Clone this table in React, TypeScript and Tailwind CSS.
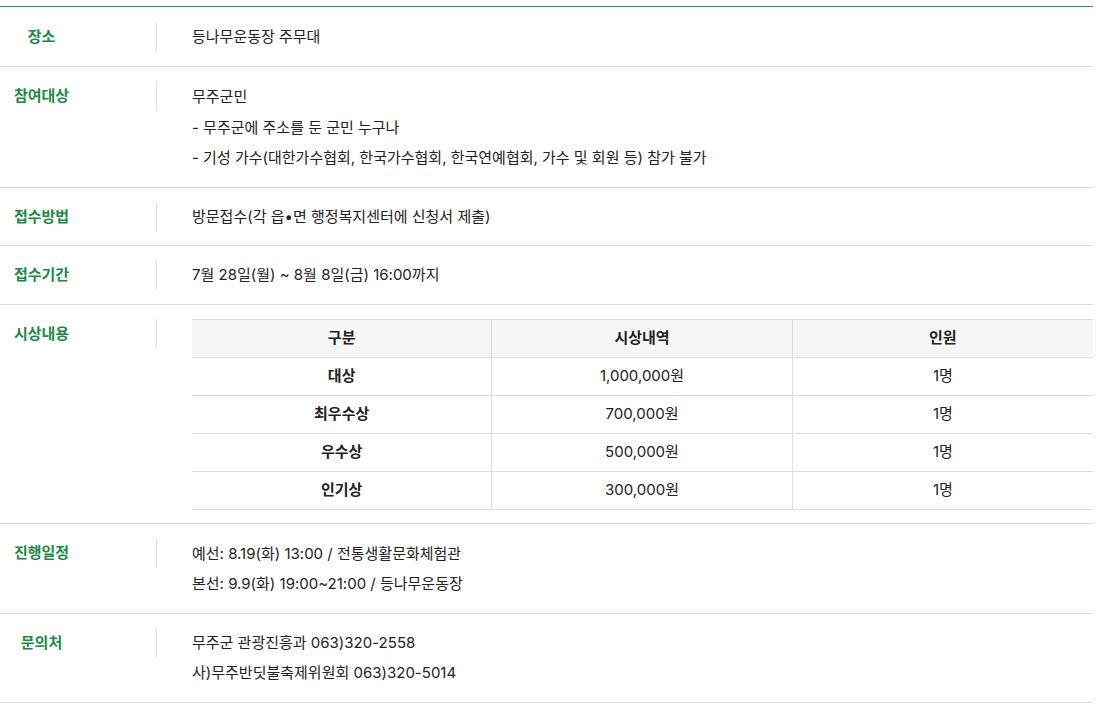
const prizes = [
  { name: "대상", amount: "1,000,000원", count: "1명" },
  { name: "최우수상", amount: "700,000원", count: "1명" },
  { name: "우수상", amount: "500,000원", count: "1명" },
  { name: "인기상", amount: "300,000원", count: "1명" },
];

const Row = ({ label, pad = "pt-[14px] pb-[14px]", children }: { label: string; pad?: string; children: React.ReactNode }) => (
  <div className={`flex border-b border-[#dddddd] ${pad}`}>
    <div className="w-[157px] shrink-0 h-[30px] border-r border-[#dddddd] flex">
      <div className="w-[83px] text-center font-bold text-[#1b8a45] leading-[30px]">{label}</div>
    </div>
    <div className="flex-1 pl-[35px] leading-[30px] text-[#222222]">{children}</div>
  </div>
);

export default function App() {
  return (
    <div
      className="bg-white min-h-[708px] pt-[6px] text-[15px]"
      style={{ fontFamily: 'Inter, "Noto Sans CJK KR", sans-serif' }}
    >
      <div className="w-[1093px] border-t border-[#1a9a4c]">
        <Row label="장소" pad="pt-[15px] pb-[14px]">등나무운동장 주무대</Row>
        <Row label="참여대상">
          <p className="leading-[31px]">무주군민</p>
          <p className="leading-[31px]">- 무주군에 주소를 둔 군민 누구나</p>
          <p>- 기성 가수(대한가수협회, 한국가수협회, 한국연예협회, 가수 및 회원 등) 참가 불가</p>
        </Row>
        <Row label="접수방법" pad="pt-[14px] pb-[13px]">방문접수(각 읍•면 행정복지센터에 신청서 제출)</Row>
        <Row label="접수기간">7월 28일(월) ~ 8월 8일(금) 16:00까지</Row>
        <Row label="시상내용" pad="pt-[14px] pb-[13px]">
          <div className="border-t border-[#dddddd] leading-normal">
            <div className="grid grid-cols-3 bg-[#f7f7f7] border-b border-[#dddddd] font-bold">
              <div className="h-[37px] flex items-center justify-center border-r border-[#dddddd]">구분</div>
              <div className="h-[37px] flex items-center justify-center border-r border-[#dddddd]">시상내역</div>
              <div className="h-[37px] flex items-center justify-center">인원</div>
            </div>
            {prizes.map((p) => (
              <div key={p.name} className="grid grid-cols-3 border-b border-[#dddddd]">
                <div className="h-[37px] flex items-center justify-center border-r border-[#dddddd] font-bold">{p.name}</div>
                <div className="h-[37px] flex items-center justify-center border-r border-[#dddddd]">{p.amount}</div>
                <div className="h-[37px] flex items-center justify-center">{p.count}</div>
              </div>
            ))}
          </div>
        </Row>
        <Row label="진행일정">
          <p className="leading-[31px]">예선: 8.19(화) 13:00 / 전통생활문화체험관</p>
          <p>본선: 9.9(화) 19:00~21:00 / 등나무운동장</p>
        </Row>
        <Row label="문의처">
          <p>무주군 관광진흥과 063)320-2558</p>
          <p>사)무주반딧불축제위원회 063)320-5014</p>
        </Row>
      </div>
    </div>
  );
}
